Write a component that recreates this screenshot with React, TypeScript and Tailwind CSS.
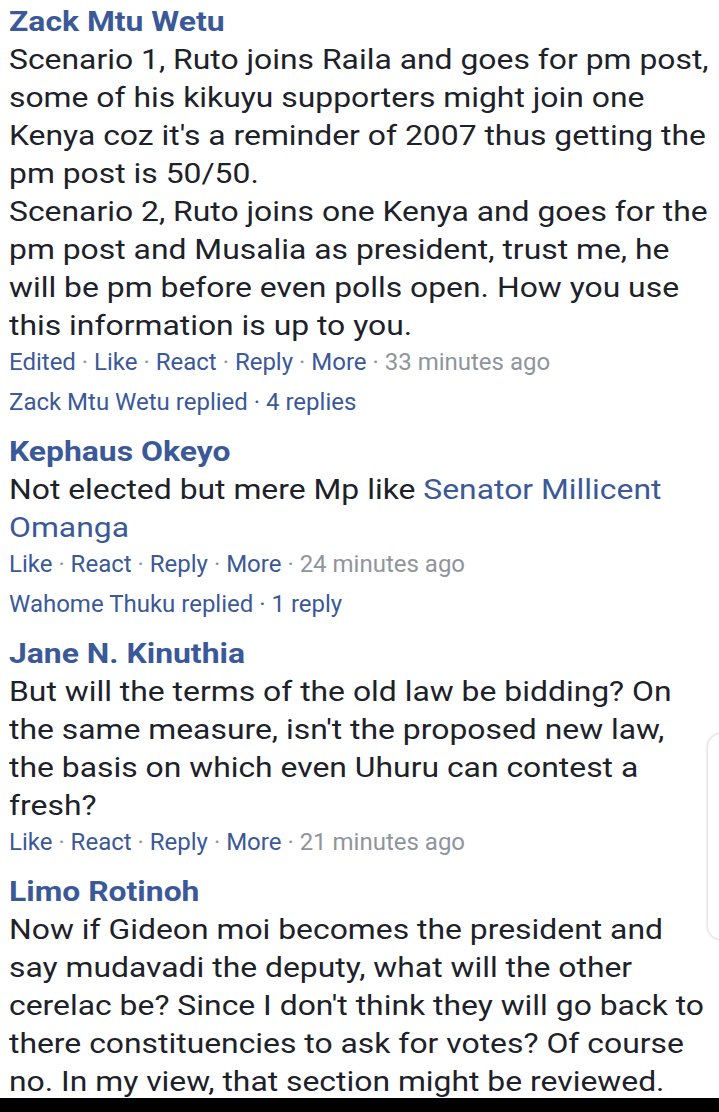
import React from 'react';

type Segment = { text: string; link?: boolean };

interface CommentProps {
  author: string;
  lines: (string | Segment[])[];
  actions: string[];
  time: string;
  replied?: string;
}

const Dot = () => <span className="text-[#90949c]"> · </span>;

const Comment: React.FC<CommentProps> = ({ author, lines, actions, time, replied }) => (
  <div className="flex flex-col">
    <div className="origin-left scale-x-[1.18] whitespace-nowrap text-[27px] leading-[38px] font-bold text-[#3b5998]">
      {author}
    </div>
    <div className="origin-left scale-x-[1.18] text-[27px] leading-[38px] text-[#1d2129]">
      {lines.map((line, i) => (
        <div key={i} className="whitespace-nowrap">
          {typeof line === 'string'
            ? line
            : line.map((seg, j) => (
                <span key={j} className={seg.link ? 'text-[#3b5998]' : ''}>
                  {seg.text}
                </span>
              ))}
        </div>
      ))}
    </div>
    <div className="mt-[2px] text-[24px] leading-[30px] text-[#3b5998] whitespace-pre">
      {actions.map((a, i) => (
        <React.Fragment key={a}>
          {i > 0 && <Dot />}
          {a}
        </React.Fragment>
      ))}
      <Dot />
      <span className="text-[#90949c]">{time}</span>
    </div>
    {replied && (
      <div className="mt-[10px] text-[24px] leading-[30px] text-[#3b5998] whitespace-nowrap">{replied}</div>
    )}
  </div>
);

export default function App() {
  return (
    <div
      className="relative w-[719px] h-[1112px] overflow-hidden bg-white"
      style={{ fontFamily: 'Roboto, "Noto Sans", sans-serif' }}
    >
      <div className="flex flex-col gap-[16px] pl-[9px] pt-[3px]">
        <Comment
          author="Zack Mtu Wetu"
          lines={[
            'Scenario 1, Ruto joins Raila and goes for pm post,',
            'some of his kikuyu supporters might join one',
            "Kenya coz it's a reminder of 2007 thus getting the",
            'pm post is 50/50.',
            'Scenario 2, Ruto joins one Kenya and goes for the',
            'pm post and Musalia as president, trust me, he',
            'will be pm before even polls open. How you use',
            'this information is up to you.',
          ]}
          actions={['Edited', 'Like', 'React', 'Reply', 'More']}
          time="33 minutes ago"
          replied="Zack Mtu Wetu replied · 4 replies"
        />
        <Comment
          author="Kephaus Okeyo"
          lines={[
            [{ text: 'Not elected but mere Mp like ' }, { text: 'Senator Millicent', link: true }],
            [{ text: 'Omanga', link: true }],
          ]}
          actions={['Like', 'React', 'Reply', 'More']}
          time="24 minutes ago"
          replied="Wahome Thuku replied · 1 reply"
        />
        <Comment
          author="Jane N. Kinuthia"
          lines={[
            'But will the terms of the old law be bidding? On',
            "the same measure, isn't the proposed new law,",
            'the basis on which even Uhuru can contest a',
            'fresh?',
          ]}
          actions={['Like', 'React', 'Reply', 'More']}
          time="21 minutes ago"
        />
        <Comment
          author="Limo Rotinoh"
          lines={[
            'Now if Gideon moi becomes the president and',
            'say mudavadi the deputy, what will the other',
            "cerelac be? Since I don't think they will go back to",
            'there constituencies to ask for votes? Of course',
            'no. In my view, that section might be reviewed.',
          ]}
          actions={['Like', 'React', 'Reply', 'More']}
          time="21 minutes ago"
        />
      </div>

      {/* edge of a floating panel peeking in from the right */}
      <div className="absolute left-[707px] top-[733px] w-[30px] h-[207px] rounded-l-[14px] bg-white border border-[#e4e4e4] shadow-[0_0_3px_rgba(0,0,0,0.12)]" />

      {/* system navigation bar */}
      <div className="absolute left-0 right-0 bottom-0 h-[14px] bg-black" />
    </div>
  );
}
